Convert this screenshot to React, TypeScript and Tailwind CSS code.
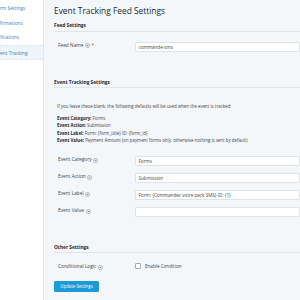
import React from "react";

const Help = () => (
  <svg width="5" height="5" viewBox="0 0 10 10" className="inline-block align-middle ml-[1.5px]">
    <circle cx="5" cy="5" r="4.2" fill="none" stroke="#8a9299" strokeWidth="1.2" />
    <circle cx="5" cy="5" r="1.6" fill="#8a9299" />
  </svg>
);

const Row = ({ label, value, req }: { label: string; value?: string; req?: boolean }) => (
  <div className="flex items-start">
    <div className="w-[81px] shrink-0 pl-[4px] leading-[6px] text-[4.8px] text-[#444]">
      {label}
      <Help />
      {req && <span className="text-[#d63638] ml-[1.5px]">*</span>}
    </div>
    <div className="flex-1 h-[10px] bg-white border border-[#dfe3e6] rounded-[1px] pl-[2.5px] flex items-center text-[4.6px] text-[#444] whitespace-nowrap overflow-hidden">
      {value}
    </div>
  </div>
);

export default function App() {
  const side = ["Form Settings", "Confirmations", "Notifications", "Event Tracking"];
  return (
    <div className="w-[300px] h-[300px] overflow-hidden flex" style={{ fontFamily: '"Open Sans", "Noto Sans", sans-serif' }}>
      <div className="w-[44px] shrink-0 bg-white border-r border-[#e3e8ec] pt-[1px] overflow-hidden">
        {side.map((s, i) => (
          <div
            key={s}
            className={
              "h-[14.67px] leading-[14.67px] text-[4.8px] text-[#3b82b8] whitespace-nowrap " +
              (i === 3 ? "bg-[#eef5f9] border-y border-dashed border-[#dde8ef] leading-[12.67px]" : "")
            }
          >
            <span className={i === 0 ? "ml-[-5.5px]" : i === 3 ? "ml-[-5px]" : "ml-[-9px]"}>{s}</span>
          </div>
        ))}
      </div>
      <div className="flex-1 bg-[#f3f7fa] pt-[5px] pl-[10px] text-[#444]">
        <div className="text-[8.4px] leading-[12px] text-[#23282d] whitespace-nowrap">Event Tracking Feed Settings</div>
        <div className="mt-[5px] leading-[6px] pb-[3px] border-b border-[#e1e6ea] text-[4.8px] font-bold text-[#23282d]">
          Feed Settings
        </div>
        <div className="mt-[10px]">
          <Row label="Feed Name" value="commande-sms" req />
        </div>
        <div className="mt-[27px] leading-[6px] pb-[2px] border-b border-[#e1e6ea] text-[4.8px] font-bold text-[#23282d]">
          Event Tracking Settings
        </div>
        <div className="mt-[15px] pl-[3px] leading-[6px] text-[4.4px] whitespace-nowrap">
          If you leave these blank, the following defaults will be used when the event is tracked:
        </div>
        <div className="mt-[6px] pl-[3px] leading-[7.33px] text-[4.4px] whitespace-nowrap">
          <div><b className="text-[#23282d]">Event Category:</b> Forms</div>
          <div><b className="text-[#23282d]">Event Action:</b> Submission</div>
          <div><b className="text-[#23282d]">Event Label:</b> Form: {"{form_title}"} ID: {"{form_id}"}</div>
          <div><b className="text-[#23282d]">Event Value:</b> Payment Amount (on payment forms only, otherwise nothing is sent by default)</div>
        </div>
        <div className="mt-[12px] flex flex-col gap-[7px]">
          <Row label="Event Category" value="Forms" />
          <Row label="Event Action" value="Submission" />
          <Row label="Event Label" value="Form: {Commandez votre pack SMS} ID: {1}" />
          <Row label="Event Value" value="" />
        </div>
        <div className="mt-[27px] leading-[6px] pb-[2px] border-b border-[#e1e6ea] text-[4.8px] font-bold text-[#23282d]">
          Other Settings
        </div>
        <div className="mt-[10px] flex items-start">
          <div className="w-[81px] shrink-0 pl-[4px] leading-[6px] text-[4.8px]">
            Conditional Logic
            <Help />
          </div>
          <div className="flex items-center gap-[4px]">
            <div className="w-[6px] h-[6px] bg-white border border-[#a7aaad] rounded-[1px]" />
            <span className="text-[4.6px] leading-[6px]">Enable Condition</span>
          </div>
        </div>
        <div className="mt-[11px]">
          <div className="w-[45px] h-[11px] bg-[#1a9ad6] rounded-[1.5px] text-white text-[4.4px] flex items-center justify-center">
            Update Settings
          </div>
        </div>
      </div>
    </div>
  );
}
